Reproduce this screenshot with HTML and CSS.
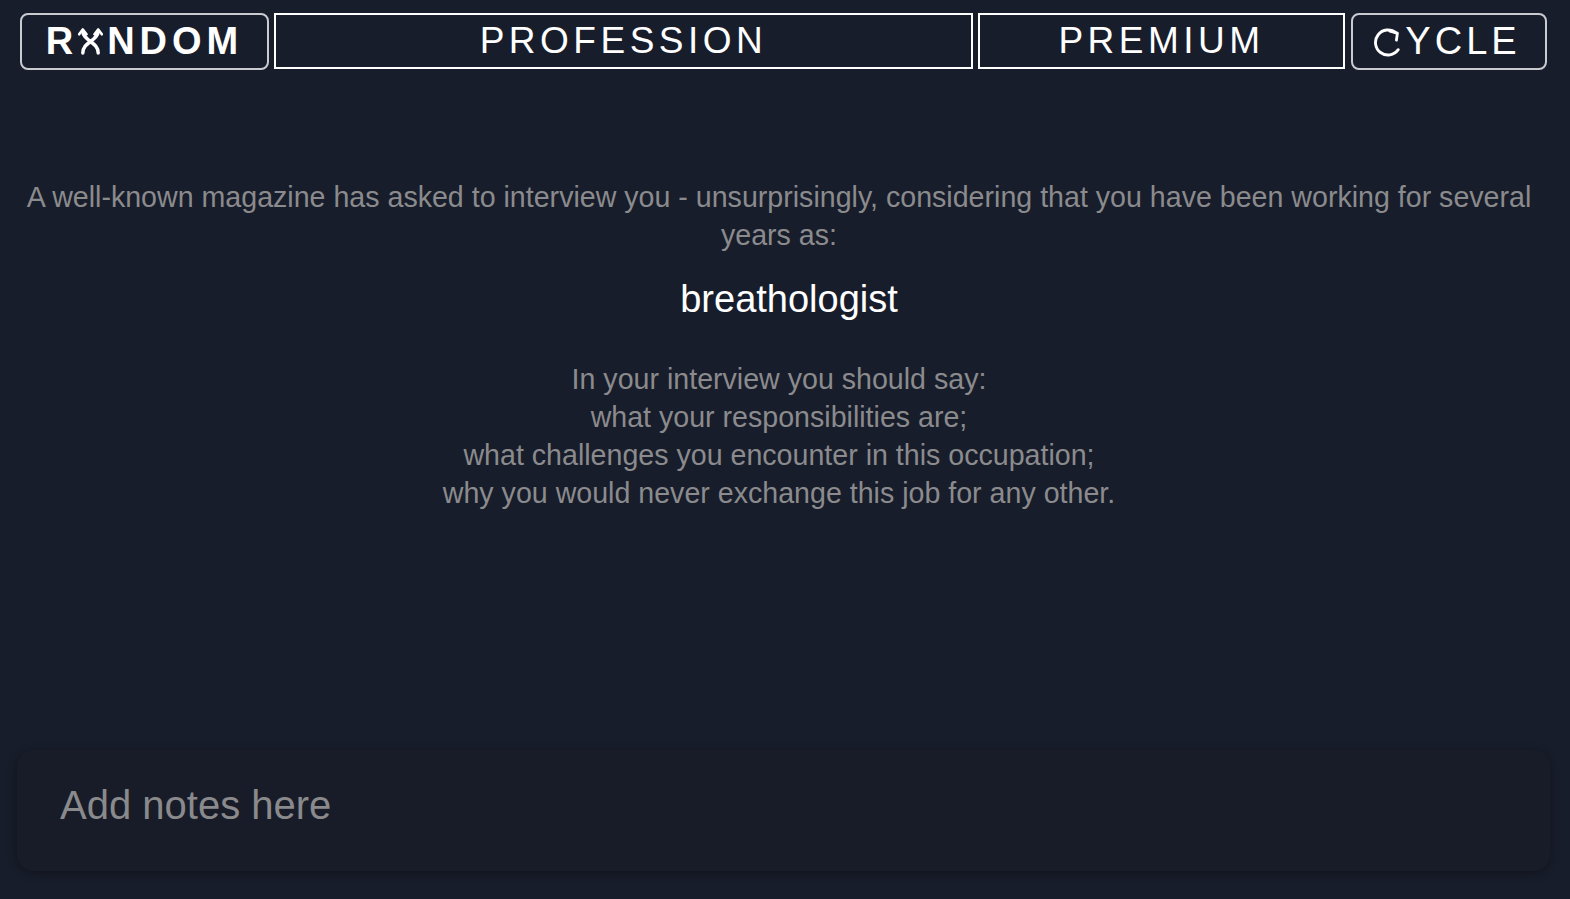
FILE: index.html
```html
<!DOCTYPE html>
<html>
<head>
<meta charset="utf-8">
<link rel="stylesheet" href="styles.css">
</head>
<body>
<div class="page">
  <header class="topbar">
    <button class="btn btn-round btn-random">R<svg class="glyph-x" viewBox="0 0 26 28" width="25" height="27"><path d="M5 26 C5 20 9 17 13 14 C17 11 21 8 21 3" fill="none" stroke="#fff" stroke-width="3.6" stroke-linecap="round"/><path d="M21 26 C21 20 17 17 13 14 C9 11 5 8 5 3" fill="none" stroke="#fff" stroke-width="3.6" stroke-linecap="round"/><path d="M1.2 6.5 L5 1.5 L8.8 6.5" fill="none" stroke="#fff" stroke-width="2.8" stroke-linejoin="round" stroke-linecap="round"/><path d="M17.2 6.5 L21 1.5 L24.8 6.5" fill="none" stroke="#fff" stroke-width="2.8" stroke-linejoin="round" stroke-linecap="round"/></svg>NDOM</button>
    <button class="btn btn-square btn-profession">PROFESSION</button>
    <button class="btn btn-square btn-premium">PREMIUM</button>
    <button class="btn btn-round btn-cycle"><svg class="glyph-c" viewBox="0 0 29 29" width="29" height="29"><path d="M22 4.9 A12.5 12.5 0 1 0 24.2 21.7" fill="none" stroke="#fff" stroke-width="2.9" stroke-linecap="round"/><path d="M15.8 3.2 L23.4 5.2 L22.4 12.2" fill="none" stroke="#fff" stroke-width="2.8" stroke-linecap="round" stroke-linejoin="round"/></svg>YCLE</button>
  </header>

  <main class="content">
    <p class="intro">A well-known magazine has asked to interview you - unsurprisingly, considering that you have been working for several years as:</p>
    <h1 class="title">breathologist</h1>
    <div class="prompts">
      <div>In your interview you should say:</div>
      <div>what your responsibilities are;</div>
      <div>what challenges you encounter in this occupation;</div>
      <div>why you would never exchange this job for any other.</div>
    </div>
  </main>

  <div class="notes">
    <div class="notes-placeholder">Add notes here</div>
  </div>
</div>
</body>
</html>
```

FILE: styles.css
```css
html, body {
  margin: 0;
  padding: 0;
  background: #181d2b;
  height: 100%;
}

.page {
  height: 899px;
  display: flex;
  flex-direction: column;
  font-family: "Liberation Sans", Arial, sans-serif;
  overflow: hidden;
}

.topbar {
  display: flex;
  gap: 5px;
  padding: 13px 0 0 20px;
  height: 57px;
}

.btn {
  height: 57px;
  background: #181d2b;
  color: #fff;
  font-family: "Liberation Sans", Arial, sans-serif;
  font-size: 37px;
  letter-spacing: 4.5px;
  display: flex;
  align-items: center;
  justify-content: center;
  padding: 0;
  box-sizing: border-box;
  cursor: pointer;
}

.btn-round {
  border: 2px solid #c9cbd0;
  border-radius: 8px;
  font-size: 38px;
}

.btn-square {
  border: 2px solid #ffffff;
  border-radius: 0;
  height: 56px;
}

.btn-random {
  width: 249px;
  font-weight: bold;
  letter-spacing: 5px;
}

.btn-profession { width: 699px; }
.btn-premium { width: 367px; }
.btn-cycle { width: 196px; margin-left: 1px; letter-spacing: 4px; }

.glyph-x {
  margin-right: 4px;
  margin-top: -1px;
}

.glyph-c {
  margin-right: 2px;
  margin-left: -3px;
  margin-top: 1px;
}

.content {
  flex: 1;
  text-align: center;
  padding: 108px 26px 0 14px;
  font-family: "Liberation Sans", Arial, sans-serif;
  color: #8b8b8d;
  font-size: 28.6px;
  line-height: 38px;
}

.intro {
  margin: 0;
}

.title {
  margin: 23px 0 39px;
  padding-left: 20px;
  color: #fff;
  font-weight: normal;
  font-size: 38px;
  line-height: 44px;
}

.prompts {
  line-height: 38px;
}

.notes {
  margin: 0 20px 28px 17px;
  height: 121px;
  border-radius: 16px;
  background: #181c29;
  box-shadow: 0 2px 8px rgba(0, 0, 0, 0.35);
  box-sizing: border-box;
  padding: 29px 43px;
}

.notes-placeholder {
  font-family: "Liberation Sans", Arial, sans-serif;
  color: #8a8a8c;
  font-size: 40px;
  line-height: 52px;
}
```
